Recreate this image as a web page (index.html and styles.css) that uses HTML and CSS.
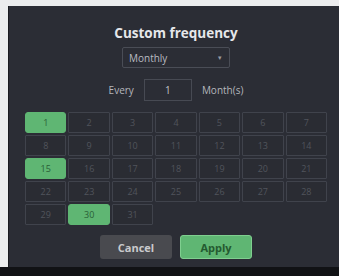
FILE: index.html
```html
<!DOCTYPE html>
<html>
<head>
<meta charset="utf-8">
<link rel="stylesheet" href="styles.css">
</head>
<body>
<div class="page">
  <div class="panel">
    <h1 class="title">Custom frequency</h1>
    <div class="select">
      <span>Monthly</span>
      <span class="caret">▾</span>
    </div>
    <div class="every">
      <span class="lbl">Every</span>
      <div class="num">1</div>
      <span class="lbl">Month(s)</span>
    </div>
    <div class="grid">
      <div class="cell on">1</div><div class="cell">2</div><div class="cell">3</div><div class="cell">4</div><div class="cell">5</div><div class="cell">6</div><div class="cell">7</div>
      <div class="cell">8</div><div class="cell">9</div><div class="cell">10</div><div class="cell">11</div><div class="cell">12</div><div class="cell">13</div><div class="cell">14</div>
      <div class="cell on">15</div><div class="cell">16</div><div class="cell">17</div><div class="cell">18</div><div class="cell">19</div><div class="cell">20</div><div class="cell">21</div>
      <div class="cell">22</div><div class="cell">23</div><div class="cell">24</div><div class="cell">25</div><div class="cell">26</div><div class="cell">27</div><div class="cell">28</div>
      <div class="cell">29</div><div class="cell on">30</div><div class="cell">31</div>
    </div>
    <div class="buttons">
      <button class="btn cancel">Cancel</button>
      <button class="btn apply">Apply</button>
    </div>
  </div>
  <div class="footer"></div>
</div>
</body>
</html>
```
FILE: styles.css
```css
html, body {
  margin: 0;
  padding: 0;
  background: #ecedee;
  font-family: "Open Sans", "Lato", sans-serif;
  overflow: hidden;
}
.page {
  width: 339px;
  height: 276px;
  display: flex;
  flex-direction: column;
  padding-top: 6px;
  box-sizing: border-box;
}
.panel {
  margin-left: 8px;
  height: 261px;
  background: #2b2d35;
  border-left: 1px solid #1a1c20;
  display: flex;
  flex-direction: column;
  align-items: center;
  box-sizing: border-box;
  padding-top: 18px;
  padding-left: 4px;
}
.footer {
  flex: 1;
  background: #111215;
}
.title {
  margin: 0;
  font-size: 13.5px;
  font-weight: 700;
  color: #e6e7ea;
  line-height: 18px;
}
.select {
  margin-top: 5px;
  width: 108px;
  height: 21px;
  box-sizing: border-box;
  border: 1px solid #4a4d56;
  border-radius: 2px;
  display: flex;
  align-items: center;
  justify-content: space-between;
  padding: 0 7px 0 6px;
  font-size: 10px;
  color: #b9bbc1;
}
.caret {
  font-size: 7px;
  color: #9a9ca3;
}
.every {
  margin-top: 11px;
  display: flex;
  align-items: center;
  gap: 10px;
  font-size: 10px;
  color: #b4b6bc;
}
.num {
  width: 48px;
  height: 22px;
  box-sizing: border-box;
  border: 1px solid #474a53;
  display: flex;
  align-items: center;
  justify-content: center;
  color: #c0c2c7;
}
.grid {
  margin-top: 11px;
  width: 302px;
  display: grid;
  grid-template-columns: repeat(7, 1fr);
  grid-auto-rows: 21px;
  gap: 2px;
}
.cell {
  border: 1px solid #40434c;
  background: #2a2c33;
  display: flex;
  align-items: center;
  justify-content: center;
  font-size: 9px;
  color: #51545c;
  border-radius: 1px;
}
.cell.on {
  background: #5fb673;
  border-color: #5fb673;
  color: #2a5e37;
  border-radius: 3px;
}
.buttons {
  margin-top: 10px;
  display: flex;
  gap: 8px;
}
.btn {
  width: 72px;
  height: 24px;
  border: none;
  border-radius: 3px;
  font-family: inherit;
  font-size: 11px;
  font-weight: 700;
}
.cancel {
  background: #494a4f;
  color: #c9cacd;
}
.apply {
  background: #5fb673;
  color: #245a30;
  border: 1px solid #7fcf8f;
}
```
